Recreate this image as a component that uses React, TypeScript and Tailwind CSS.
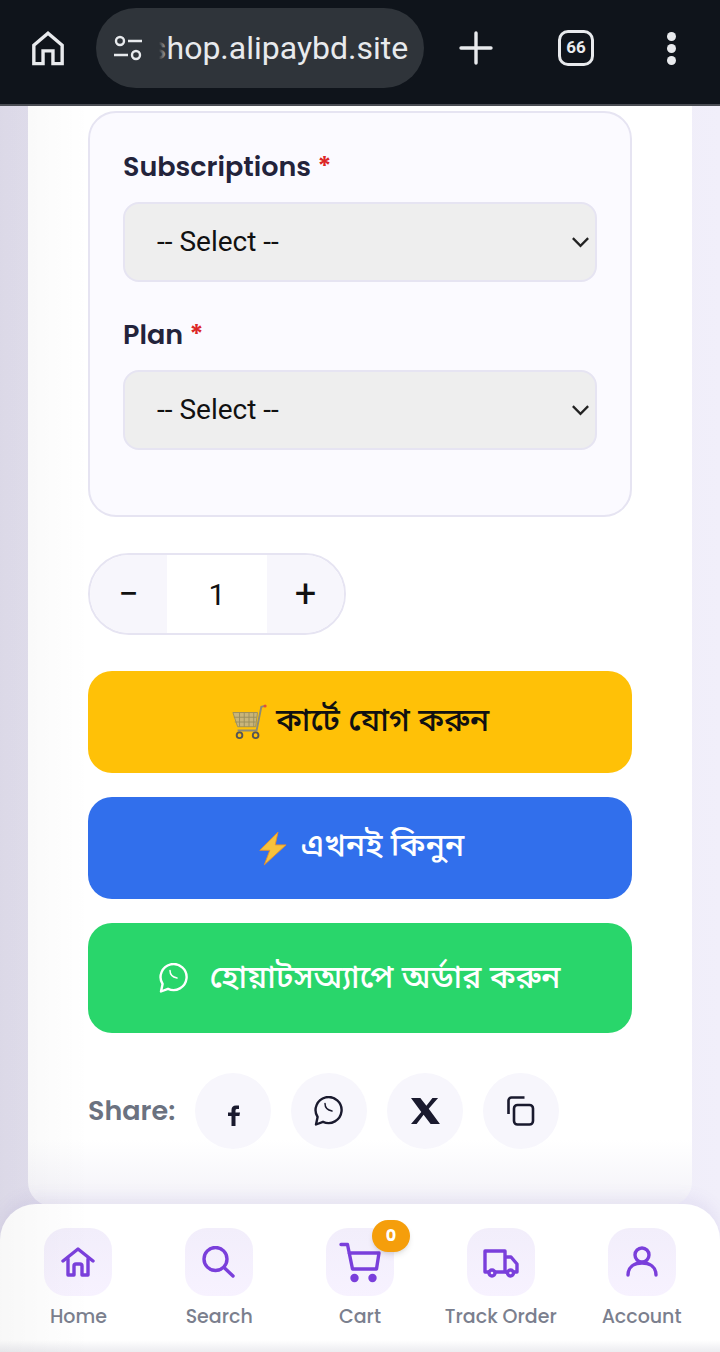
import type { ReactNode } from "react";

const sans = "font-['Poppins','Inter','Noto_Sans',sans-serif]";
const bengali = "font-['Noto_Sans_Bengali','Noto_Sans',sans-serif]";

function Field({ label }: { label: string }) {
  return (
    <div>
      <div className={`${sans} text-[27px] leading-[40px] font-semibold text-[#23233b]`}>
        {label} <span className="text-[#dc2626]">*</span>
      </div>
      <div className="mt-[15px] flex h-[80px] items-center justify-between rounded-[16px] border-2 border-[#e6e4f2] bg-[#eeeeee] pl-[32px] pr-[4px] font-['Roboto',sans-serif] text-[28px] text-[#111]">
        <span>-- Select --</span>
        <svg width="21" height="14" viewBox="0 0 22 14" fill="none" stroke="#222" strokeWidth="2.4">
          <path d="M3 3l8 8 8-8" />
        </svg>
      </div>
    </div>
  );
}

function ShareButton({ children }: { children: ReactNode }) {
  return (
    <div className="flex h-[76px] w-[76px] items-center justify-center rounded-full bg-[#f7f6fc] text-[#1a1a2e]">
      {children}
    </div>
  );
}

function WhatsApp({ color }: { color: string }) {
  return (
    <svg width="30" height="30" viewBox="0 0 30 30" fill="none" stroke={color} strokeWidth="2.4" strokeLinecap="round" strokeLinejoin="round">
      <path d="M2 28.500L3.600 21A13 13 0 1 1 9 25.800Z" />
      <path d="M11 7.500C11 11 13 14 18 15" strokeWidth="1.500" />
    </svg>
  );
}

function NavItem({ label, children, badge }: { label: string; children: ReactNode; badge?: string }) {
  return (
    <div className="flex w-[141px] flex-col items-center">
      <div className="relative flex h-[68px] w-[68px] items-center justify-center rounded-[22px] bg-gradient-to-b from-[#f2eefb] to-[#f7f2ff] text-[#7a3fdb]">
        {children}
        {badge && (
          <span className={`${sans} absolute -top-[8px] -right-[16px] flex h-[32px] w-[38px] items-center justify-center rounded-full bg-[#f59e0b] text-[16px] font-bold text-white shadow-md`}>
            {badge}
          </span>
        )}
      </div>
      <span className={`${sans} mt-[7px] text-[19px] leading-[28px] font-medium whitespace-nowrap text-[#7b7f8e]`}>{label}</span>
    </div>
  );
}

export default function App() {
  return (
    <div className="relative flex h-[1352px] w-[720px] flex-col overflow-hidden bg-gradient-to-r from-[#e2dfee] to-[#f1effa]">
      {/* browser toolbar */}
      <header className="flex h-[106px] shrink-0 items-center border-b-2 border-[#4a4d54] bg-[#0f141b] pb-[8px] text-[#e8eaed]">
        <div className="flex w-[96px] justify-center">
          <svg width="34" height="36" viewBox="0 0 24 25" fill="none" stroke="#e8eaed" strokeWidth="2.400">
            <path d="M2 23.500V10.500L12 2l10 8.500v13h-6.500v-9h-7v9z" />
          </svg>
        </div>
        <div className="relative flex h-[80px] w-[328px] items-center overflow-hidden rounded-full bg-[#2f343a] pl-[16px]">
          <svg width="32" height="28" viewBox="0 0 32 28" fill="none" stroke="#e8eaed" strokeWidth="2.4" className="shrink-0">
            <circle cx="8" cy="7" r="4" />
            <path d="M16 7h14M2 21h14" />
            <circle cx="24" cy="21" r="4" />
          </svg>
          <span className="ml-[6px] font-['Roboto',sans-serif] text-[32px] whitespace-nowrap text-[#e8eaed]">shop.alipaybd.site</span>
          <span className="absolute top-0 left-[52px] h-full w-[22px] bg-gradient-to-r from-[#2f343a] from-[50%] to-transparent" />
        </div>
        <div className="flex w-[104px] justify-center">
          <svg width="36" height="36" viewBox="0 0 36 36" stroke="#e8eaed" strokeWidth="3.4" strokeLinecap="round">
            <path d="M18 3v30M3 18h30" />
          </svg>
        </div>
        <div className="ml-[30px] flex h-[36px] w-[36px] items-center justify-center rounded-[10px] border-[3px] border-[#e8eaed] font-['Roboto',sans-serif] text-[17px] font-bold">
          66
        </div>
        <div className="ml-[73px] flex flex-col gap-[3px]">
          <span className="h-[9px] w-[9px] rounded-full bg-[#e8eaed]" />
          <span className="h-[9px] w-[9px] rounded-full bg-[#e8eaed]" />
          <span className="h-[9px] w-[9px] rounded-full bg-[#e8eaed]" />
        </div>
      </header>

      {/* product card, scrolled so its top is out of view */}
      <main className="mx-[28px] h-[1100px] shrink-0 rounded-b-[24px] bg-gradient-to-b from-white from-[94%] to-[#f3f2f8] px-[60px] pt-[5px]">
        <section className="flex h-[406px] flex-col gap-[33px] rounded-[28px] border-2 border-[#e6e4f2] bg-[#fbfaff] px-[33px] pt-[34px]">
          <Field label="Subscriptions" />
          <Field label="Plan" />
        </section>

        <div className="mt-[36px] flex h-[82px] w-[258px] overflow-hidden rounded-full border-2 border-[#e6e4f2] font-['Roboto',sans-serif] text-[#111]">
          <span className="flex flex-1 items-center justify-center bg-[#f7f6fc] text-[36px]">−</span>
          <span className="flex w-[100px] items-center justify-center bg-white text-[30px]">1</span>
          <span className="flex flex-1 items-center justify-center bg-[#f7f6fc] text-[38px]">+</span>
        </div>

        <div className={`${bengali} mt-[36px] flex h-[102px] items-center justify-center gap-[9px] rounded-[24px] bg-[#ffc107] pt-[1px] text-[32px] font-medium text-[#111]`}>
          <svg width="36" height="36" viewBox="0 0 38 38" fill="none" className="-mt-[1px]">
            <path d="M2 9h26l-2 15H7z" fill="#c9b57a" stroke="#9b8f5e" strokeWidth="1" />
            <path d="M9 9v15M14 9v15M19 9v15M24 9v15M3 14h24M4 19h22" stroke="#9b8f5e" strokeWidth="1" />
            <path d="M36 2l-4 1-5 25H7" stroke="#8a8a7a" strokeWidth="2" />
            <circle cx="36" cy="2" r="1.600" fill="#e0503a" />
            <circle cx="9" cy="33" r="3" stroke="#555" strokeWidth="2" />
            <circle cx="26" cy="33" r="3" stroke="#555" strokeWidth="2" />
          </svg>
          <span>কার্টে যোগ করুন</span>
        </div>

        <div className={`${bengali} mt-[24px] flex h-[102px] items-center justify-center gap-[14px] rounded-[24px] bg-[#316fec] pl-[2px] text-[32px] font-medium text-white`}>
          <svg width="29" height="35" viewBox="0 0 32 36">
            <path d="M22 0L2 20h11L7 36l24-22H19z" fill="#f6c23c" stroke="#e8902a" strokeWidth="1" />
          </svg>
          <span>এখনই কিনুন</span>
        </div>

        <div className={`${bengali} mt-[24px] flex h-[110px] items-center justify-center gap-[20px] rounded-[24px] bg-[#29d66b] text-[32px] font-medium text-white`}>
          <WhatsApp color="#fff" />
          <span className="pt-[3px]">হোয়াটসঅ্যাপে অর্ডার করুন</span>
        </div>

        <div className="mt-[40px] flex items-center">
          <span className={`${sans} w-[107px] text-[27px] font-semibold whitespace-nowrap text-[#6b7280]`}>Share:</span>
          <div className="flex gap-[20px]">
            <ShareButton>
              <svg width="12" height="21" viewBox="0 0 12 21" fill="#1a1a2e" className="mt-[8px] ml-[2px]">
                <path d="M3.500 21V11H0V7.500h3.500V5c0-3 1.500-4.500 4.500-4.500h3v3.500H9.500C8 4 7.500 4.500 7.500 5.500v2H12L11.400 11H7.500v10z" />
              </svg>
            </ShareButton>
            <ShareButton>
              <WhatsApp color="#1a1a2e" />
            </ShareButton>
            <ShareButton>
              <svg width="30" height="28" viewBox="0 0 32 30" fill="#1a1a2e">
                <path d="M1 1h10l6.500 8.500L24 1h6L20 12.500 32 29H22l-7.500-10L7 29H1l11-13z" />
              </svg>
            </ShareButton>
            <ShareButton>
              <svg width="28" height="30" viewBox="0 0 28 30" fill="none" stroke="#1a1a2e" strokeWidth="2.600" strokeLinejoin="round">
                <rect x="7" y="9" width="19" height="19.500" rx="3.500" />
                <path d="M1.500 18V4.500a3 3 0 0 1 3-3h13" />
              </svg>
            </ShareButton>
          </div>
        </div>
      </main>

      {/* fixed bottom nav */}
      <nav className="absolute right-0 bottom-0 left-0 flex h-[148px] justify-between rounded-t-[36px] bg-gradient-to-b from-white from-[92%] to-[#ececf0] px-[8px] pt-[24px] shadow-[0_-6px_16px_rgba(120,100,190,0.10)]">
        <NavItem label="Home">
          <svg width="34" height="30" viewBox="0 0 34 30" fill="none" stroke="currentColor" strokeWidth="3.400" strokeLinecap="round" strokeLinejoin="round">
            <path d="M2 14L17 2l15 12" />
            <path d="M7 12v16h6V19q0-2 2-2h4q2 0 2 2v9h6V12" />
          </svg>
        </NavItem>
        <NavItem label="Search">
          <svg width="34" height="32" viewBox="0 0 34 32" fill="none" stroke="currentColor" strokeWidth="3.400" strokeLinecap="round">
            <circle cx="13.500" cy="13" r="11.500" />
            <path d="M22 21.500L31 30" />
          </svg>
        </NavItem>
        <NavItem label="Cart" badge="0">
          <svg width="42" height="42" viewBox="0 0 42 42" fill="none" stroke="currentColor" strokeWidth="3.400" strokeLinecap="round" strokeLinejoin="round">
            <path d="M2 3.500h6.500L13.500 28h24L40 12H10" />
            <circle cx="15.500" cy="37" r="2.500" fill="currentColor" />
            <circle cx="33.500" cy="37" r="2.500" fill="currentColor" />
          </svg>
        </NavItem>
        <NavItem label="Track Order">
          <svg width="36" height="30" viewBox="0 0 36 30" fill="none" stroke="currentColor" strokeWidth="3.400" strokeLinejoin="round" className="mt-[2px]">
            <path d="M6 24H2V3h20v21H12" />
            <path d="M22 9h6l6 7v8h-3M22 24h2" />
            <circle cx="9" cy="25" r="3" />
            <circle cx="27.500" cy="25" r="3" />
          </svg>
        </NavItem>
        <NavItem label="Account">
          <svg width="32" height="32" viewBox="0 0 32 32" fill="none" stroke="currentColor" strokeWidth="3.400" strokeLinecap="round">
            <circle cx="16" cy="9" r="7" />
            <path d="M2 29c0-8 6-12 14-12s14 4 14 12" />
          </svg>
        </NavItem>
      </nav>

      {/* soft shade along the left edge, above everything under the toolbar */}
      <div className="pointer-events-none absolute top-[106px] bottom-0 left-0 w-[90px] bg-gradient-to-r from-black/3 to-transparent" />
    </div>
  );
}
